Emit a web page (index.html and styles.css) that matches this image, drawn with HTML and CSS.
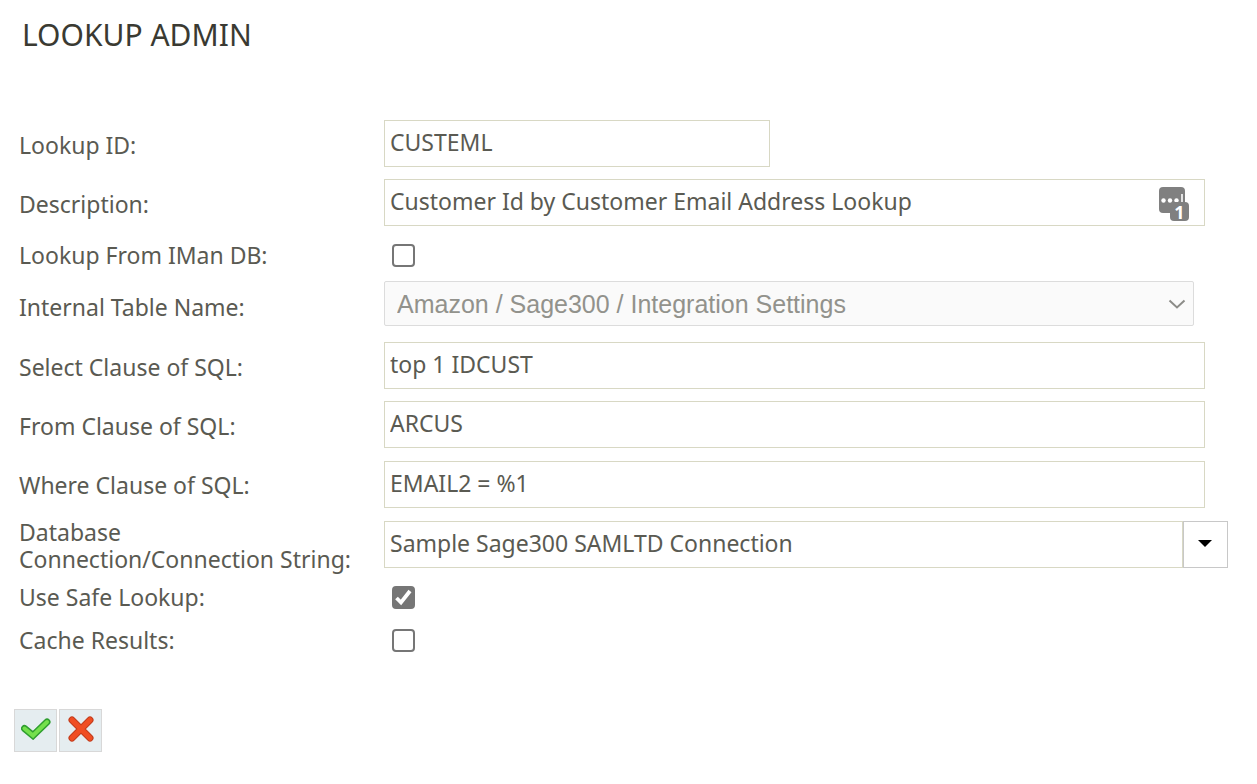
FILE: index.html
```html
<!DOCTYPE html>
<html lang="en">
<head>
<meta charset="utf-8">
<title>Lookup Admin</title>
<link rel="stylesheet" href="styles.css">
</head>
<body>
<main class="page">
  <h1 class="title">LOOKUP ADMIN</h1>
  <form class="form">
    <div class="row">
      <label class="label" for="lookup-id">Lookup ID:</label>
      <div class="field"><input class="text short" id="lookup-id" type="text" value="CUSTEML"></div>
    </div>
    <div class="row">
      <label class="label" for="description">Description:</label>
      <div class="field">
        <input class="text" id="description" type="text" value="Customer Id by Customer Email Address Lookup">
        <span class="badge">
          <svg width="31" height="35" viewBox="0 0 31 35" aria-hidden="true">
            <rect x="0" y="0" width="26" height="26" rx="4" fill="#808080"/>
            <circle cx="4.500" cy="13.500" r="2.200" fill="#fff"/>
            <circle cx="11" cy="13.500" r="2.200" fill="#fff"/>
            <circle cx="17.500" cy="13.500" r="2.200" fill="#fff"/>
            <rect x="22" y="7" width="2" height="9" fill="#e4e4e4"/>
            <rect x="11" y="15" width="19" height="19" rx="4" fill="#808080"/>
          </svg>
          <span class="badge-count">1</span>
        </span>
      </div>
    </div>
    <div class="row row-check">
      <label class="label" for="iman-db">Lookup From IMan DB:</label>
      <div class="field"><input class="check" id="iman-db" type="checkbox"></div>
    </div>
    <div class="row row-select">
      <label class="label" for="table-name">Internal Table Name:</label>
      <div class="field select-field">
        <select class="select" id="table-name" disabled><option>Amazon / Sage300 / Integration Settings</option></select>
        <svg class="chevron" width="18" height="11" viewBox="0 0 18 11" aria-hidden="true"><path d="M1.500 1.500 9 8.500 16.500 1.500" fill="none" stroke="#8c8c88" stroke-width="2"/></svg>
      </div>
    </div>
    <div class="row">
      <label class="label" for="select-clause">Select Clause of SQL:</label>
      <div class="field"><input class="text" id="select-clause" type="text" value="top 1 IDCUST"></div>
    </div>
    <div class="row">
      <label class="label" for="from-clause">From Clause of SQL:</label>
      <div class="field"><input class="text" id="from-clause" type="text" value="ARCUS"></div>
    </div>
    <div class="row row-tall">
      <label class="label" for="where-clause">Where Clause of SQL:</label>
      <div class="field"><input class="text" id="where-clause" type="text" value="EMAIL2 = %1"></div>
    </div>
    <div class="row row-tall">
      <label class="label" for="connection">Database Connection/Connection String:</label>
      <div class="field combo">
        <input class="text" id="connection" type="text" value="Sample Sage300 SAMLTD Connection">
        <button class="combo-button" type="button" aria-label="Show connections">
          <svg width="14" height="7" viewBox="0 0 14 7" aria-hidden="true"><path d="M0 0H14L7 7Z" fill="#000"/></svg>
        </button>
      </div>
    </div>
    <div class="row row-check">
      <label class="label" for="safe">Use Safe Lookup:</label>
      <div class="field"><input class="check" id="safe" type="checkbox" checked></div>
    </div>
    <div class="row row-check row-last">
      <label class="label" for="cache">Cache Results:</label>
      <div class="field"><input class="check" id="cache" type="checkbox"></div>
    </div>
    <div class="actions">
      <button class="action" type="submit" aria-label="Save">
        <svg width="30" height="22" viewBox="0 0 30 22" aria-hidden="true"><path d="M3.500 10.500 12 17.500 26 4" fill="none" stroke="#2f9e2f" stroke-width="7" stroke-linecap="round"/><path d="M3.500 10.500 12 17.500 26 4" fill="none" stroke="#74e04c" stroke-width="4" stroke-linecap="round"/></svg>
      </button>
      <button class="action" type="button" aria-label="Cancel">
        <svg width="26" height="26" viewBox="0 0 26 26" aria-hidden="true"><path d="M4 4 22 22M22 4 4 22" fill="none" stroke="#c23c1c" stroke-width="7" stroke-linecap="round"/><path d="M4 4 22 22M22 4 4 22" fill="none" stroke="#f04e23" stroke-width="5" stroke-linecap="round"/></svg>
      </button>
    </div>
  </form>
</main>
</body>
</html>
```
FILE: styles.css
```css
* {
  box-sizing: border-box;
}

body {
  margin: 0;
  background: #fff;
  color: #5a5a52;
  font: 23px/27px "Noto Sans", sans-serif;
}

.page {
  padding: 15px 29px 32px 19px;
}

.title {
  margin: 0 0 59px 3px;
  color: #3a3a32;
  font-size: 30px;
  font-weight: 400;
  line-height: 40px;
}

.row {
  display: grid;
  grid-template-columns: 365px 1fr;
  align-items: center;
  min-height: 59px;
}

.row-check {
  min-height: 46px;
}

.row-select {
  min-height: 58px;
}

.row-tall {
  min-height: 60px;
}

.row-last {
  min-height: 40px;
}

.label {
  padding: 3px 24px 0 0;
}

.row-check .label,
.row-select .label {
  padding-top: 0;
}

.field {
  display: flex;
  position: relative;
  padding-right: 23px;
}

.text {
  flex: 1;
  min-width: 0;
  height: 47px;
  padding: 0 5px 3px;
  border: 1px solid #d8d8c4;
  border-radius: 0;
  background: #fff;
  color: inherit;
  font: inherit;
}

.short {
  flex: 0 1 386px;
}

.badge {
  position: absolute;
  top: 8px;
  right: 38px;
  width: 31px;
  height: 35px;
}

.badge-count {
  position: absolute;
  right: 1px;
  bottom: 1px;
  width: 19px;
  color: #fff;
  font-size: 18px;
  font-weight: 700;
  line-height: 18px;
  text-align: center;
}

.check {
  appearance: none;
  width: 23px;
  height: 23px;
  margin: 0 0 0 8px;
  border: 2px solid #767676;
  border-radius: 4px;
  background: #fff;
}

.check:checked {
  background: #767676 url("data:image/svg+xml,%3Csvg xmlns='http://www.w3.org/2000/svg' viewBox='0 0 19 19'%3E%3Cpath d='M2.500 10 7 14.500 16 3' fill='none' stroke='white' stroke-width='3.800'/%3E%3C/svg%3E") center / 19px 19px no-repeat;
}

.select-field {
  padding: 0 34px 7px 0;
}

.select {
  appearance: none;
  flex: 1;
  min-width: 0;
  height: 45px;
  padding: 0 40px 0 12px;
  border: 1px solid #dcdcdc;
  border-radius: 2px;
  background: #fafafa;
  color: #92928c;
  font: 25px "Liberation Sans", sans-serif;
  opacity: 1;
}

.chevron {
  position: absolute;
  top: 18px;
  right: 42px;
}

.combo {
  padding-right: 0;
}

.combo-button {
  display: flex;
  align-items: center;
  justify-content: center;
  width: 45px;
  height: 47px;
  padding: 0 2px 2px 0;
  border: 1px solid #c8c8c8;
  background: #fff;
}

.actions {
  display: flex;
  gap: 2px;
  margin: 49px 0 0 -5px;
}

.action {
  display: flex;
  align-items: center;
  justify-content: center;
  width: 43px;
  height: 43px;
  padding: 0 0 4px;
  border: 1px solid #d8d8d8;
  background: #e5edf0;
}
```
